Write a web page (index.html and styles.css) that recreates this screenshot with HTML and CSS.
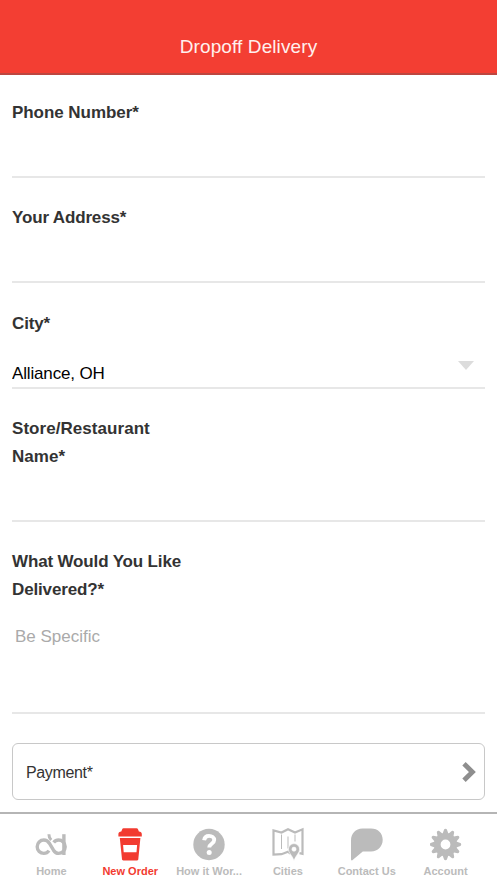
FILE: index.html
```html
<!DOCTYPE html>
<html lang="en">
<head>
    <meta charset="UTF-8">
    <meta name="viewport" content="width=device-width, initial-scale=1.0">
    <title>Dropoff Delivery</title>
    <link rel="stylesheet" href="styles.css">
</head>
<body>

    <header class="header">
        <h1>Dropoff Delivery</h1>
    </header>

    <!-- Order form -->
    <form class="order-form">
        <div class="field phone">
            <label for="phone">Phone Number*</label>
            <input type="tel" id="phone" name="phone">
        </div>
        <div class="field">
            <label for="address">Your Address*</label>
            <input type="text" id="address" name="address">
        </div>
        <div class="field city">
            <label for="city">City*</label>
            <div class="select-row">
                <select id="city" name="city">
                    <option>Alliance, OH</option>
                </select>
                <span class="arrow"></span>
            </div>
        </div>
        <div class="field store">
            <label for="store">Store/Restaurant Name*</label>
            <input type="text" id="store" name="store">
        </div>
        <div class="field items">
            <label for="items">What Would You Like Delivered?*</label>
            <textarea id="items" name="items" placeholder="Be Specific"></textarea>
        </div>
        <button type="button" class="payment">
            <span>Payment*</span>
            <svg width="14" height="20" viewBox="0 0 14 20"><path d="M2 1.800l8.400 8.200L2 18.200" fill="none" stroke="#8e8e8e" stroke-width="4.800"/></svg>
        </button>
    </form>

    <!-- Tab bar -->
    <nav class="tabs">
        <a class="tab">
            <svg width="32" height="34" viewBox="0 0 32 34">
                <g fill="none" stroke="currentColor" stroke-width="3.400">
                    <path d="M14 23.600C12.700 25.500 11 26.400 8.900 26.400a6.700 6.700 0 0 1 0-13.400c2.400 0 4.100 1.200 5.400 3.200l4.200 7c1.300 2 2.700 3.200 5 3.200a6.700 6.700 0 0 0 0-13.400c-2 0-3.600.8-4.800 2.400"/>
                    <path d="M28.900 7.200V28"/>
                    <path d="M13.900 7.200c0 2.500.5 4 2.300 5.800" stroke-width="3"/>
                </g>
            </svg>
            <span>Home</span>
        </a>
        <a class="tab active">
            <svg width="32" height="34" viewBox="0 0 32 34">
                <path fill="currentColor" d="M9.500 1.300h13c.8 0 1.300.4 1.600 1.100l.8 2c1.800.1 2.900 1 2.900 2.500v2.600H4.400V6.900c0-1.500 1.100-2.400 2.900-2.500l.8-2c.3-.7.700-1.100 1.400-1.100z"/>
                <path fill="currentColor" fill-rule="evenodd" d="M5.800 11h20.600l-2.100 21.200c-.1.800-.6 1.200-1.300 1.200H9.300c-.7 0-1.200-.4-1.300-1.200zM9.100 18l.6 7.200h12.800l.6-7.200z"/>
            </svg>
            <span>New Order</span>
        </a>
        <a class="tab">
            <svg width="32" height="34" viewBox="0 0 32 34">
                <circle cx="16" cy="17.500" r="15.700" fill="currentColor"/>
                <path d="M11.100 13.200c.5-3 2.300-4.300 4.900-4.300 2.900 0 5.200 1.700 5.200 4.200 0 3.700-5 3.600-5 7.400" fill="none" stroke="#fff" stroke-width="3.900"/>
                <circle cx="16.200" cy="25.500" r="2.500" fill="#fff"/>
            </svg>
            <span>How it Wor...</span>
        </a>
        <a class="tab">
            <svg width="34" height="34" viewBox="0 0 34 34">
                <path d="M19.500 26.500l-2.500-1.700-6.500 2.400-8 .3V3.500l8 2L17 2.300l7 3.200 7.500-3.200v24.500l-3-.6" fill="none" stroke="currentColor" stroke-width="2.200"/>
                <path d="M10.500 7.500v14.500M17 9.500v12M24 7.500v7" fill="none" stroke="currentColor" stroke-width="1"/>
                <path d="M23 16.600a5.600 5.600 0 0 1 5.600 5.600c0 3.900-3.700 5.900-5.600 11.300-1.900-5.400-5.600-7.400-5.600-11.300a5.600 5.600 0 0 1 5.600-5.600zm0 3.500a2.100 2.100 0 1 0 0 4.200 2.100 2.100 0 0 0 0-4.200z" fill="currentColor" stroke="#fff" stroke-width=".6"/>
            </svg>
            <span>Cities</span>
        </a>
        <a class="tab">
            <svg width="34" height="34" viewBox="0 0 34 34">
                <path d="M12.500 1.500h8.500c7 0 11.700 4.700 11.700 11.300S28 24.500 21 24.500h-8.200L2.300 33.200c-.6.400-1.300.1-1.300-.6V13.500C1 6.500 5.500 1.500 12.500 1.500z" fill="currentColor"/>
            </svg>
            <span>Contact Us</span>
        </a>
        <a class="tab">
            <svg width="32" height="34" viewBox="-15.500 -17.500 32 34">
                <circle r="8.200" fill="none" stroke="currentColor" stroke-width="6.600"/>
                <g fill="currentColor">
                    <path id="teeth" d="M-3.200-10l1.800-4.900c.5-1.100 2.300-1.100 2.800 0L3.200-10zM-3.200 10l1.800 4.900c.5 1.100 2.300 1.100 2.800 0L3.200 10z"/>
                    <use href="#teeth" transform="rotate(30)"/>
                    <use href="#teeth" transform="rotate(60)"/>
                    <use href="#teeth" transform="rotate(90)"/>
                    <use href="#teeth" transform="rotate(120)"/>
                    <use href="#teeth" transform="rotate(150)"/>
                </g>
            </svg>
            <span>Account</span>
        </a>
    </nav>

</body>
</html>
```

FILE: styles.css
```css
* {
    box-sizing: border-box;
}

body {
    margin: 0;
    height: 883px;
    display: flex;
    flex-direction: column;
    overflow: hidden;
    background: #fff;
    color: #333;
    font-family: "Liberation Sans", Arial, sans-serif;
}

/* Header */
.header {
    height: 75px;
    padding-top: 35px;
    background: #f33e33;
    border-bottom: 2px solid #bd4640;
    text-align: center;
}

.header h1 {
    margin: 0;
    font-size: 19px;
    line-height: 23px;
    font-weight: normal;
    letter-spacing: 0.1px;
    color: #fff0ee;
}

/* Form */
.order-form {
    flex: 1;
    padding: 0 12px;
}

.field {
    display: flex;
    flex-direction: column;
    height: 105px;
    padding-top: 26px;
    border-bottom: 2px solid #e7e7e7;
}

.field label {
    width: 175px;
    font-size: 17px;
    line-height: 28px;
    font-weight: bold;
    letter-spacing: -0.15px;
}

.field input,
.field select,
.field textarea {
    flex: 1;
    width: 100%;
    min-height: 0;
    padding: 0;
    border: none;
    outline: none;
    background: none;
    resize: none;
    font-family: inherit;
    font-size: 17px;
}

.phone {
    height: 103px;
    padding-top: 24px;
}

.phone label {
    letter-spacing: -0.05px;
}

.city {
    height: 106px;
    padding-top: 27px;
}

.store {
    height: 133px;
}

.store label {
    letter-spacing: 0.05px;
}

.items {
    height: 192px;
}

.select-row {
    flex: 1;
    display: flex;
    align-items: flex-start;
    padding-top: 22px;
}

.field select {
    appearance: none;
    color: #000;
    height: 26px;
    letter-spacing: -0.15px;
}

.arrow {
    margin: 1px 11px 0 0;
    border: 8px solid transparent;
    border-top: 9px solid #dcdcdc;
    border-bottom: 0;
}

.field textarea {
    padding: 23px 3px 0;
}

.field textarea::placeholder {
    color: #aaa;
}

.payment {
    display: flex;
    align-items: center;
    justify-content: space-between;
    width: 100%;
    height: 57px;
    margin-top: 29px;
    padding: 0 8px 0 13px;
    background: #fff;
    border: 1px solid #c8c8c8;
    border-radius: 6px;
    color: #333;
    font-family: inherit;
    font-size: 16px;
    letter-spacing: -0.35px;
}

.payment span {
    padding-top: 2px;
}

/* Tab bar */
.tabs {
    display: flex;
    height: 71px;
    padding: 13px 12px 0;
    border-top: 2px solid #b5b5b5;
}

.tab {
    flex: 1;
    display: flex;
    flex-direction: column;
    align-items: center;
    color: #bbb;
    font-size: 11px;
    line-height: 14px;
    font-weight: bold;
    white-space: nowrap;
}

.tab span {
    margin-top: 3px;
}

.active {
    color: #f23b30;
}
```
